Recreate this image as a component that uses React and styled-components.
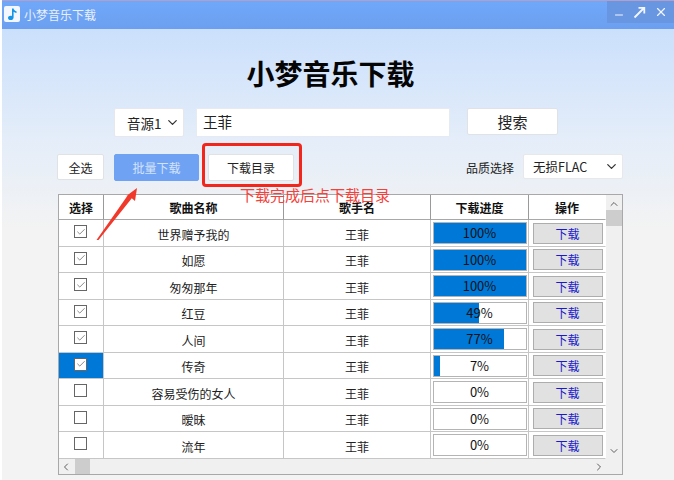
import React from 'react';
import styled, { createGlobalStyle } from 'styled-components';
import { Check, ChevronDown, ChevronUp, ChevronLeft, ChevronRight, Minus, X } from 'lucide-react';

const FONT = `"Noto Sans CJK SC", "Liberation Sans", sans-serif`;

const songs = [
  { name: '世界赠予我的', progress: 100, checked: true },
  { name: '如愿', progress: 100, checked: true },
  { name: '匆匆那年', progress: 100, checked: true },
  { name: '红豆', progress: 49, checked: true },
  { name: '人间', progress: 77, checked: true },
  { name: '传奇', progress: 7, checked: true, active: true },
  { name: '容易受伤的女人', progress: 0, checked: false },
  { name: '暧昧', progress: 0, checked: false },
  { name: '流年', progress: 0, checked: false },
];

const GlobalStyle = createGlobalStyle`
  html, body { margin: 0; padding: 0; background: #fff; }
  * { box-sizing: border-box; }
`;

const Page = styled.div`
  position: relative;
  width: 674px;
  height: 480px;
  padding-left: 2px;
  overflow: hidden;
  font-family: ${FONT};
  color: #222;
`;

const TitleBar = styled.div`
  display: flex;
  align-items: center;
  justify-content: space-between;
  height: 29px;
  border-top: 1px solid #b39fc9;
  background: linear-gradient(180deg, #70a8f9, #6c9ff0);
  color: #e8f0fd;
  font-size: 12px;
`;

const AppName = styled.div`
  display: flex;
  align-items: center;
  gap: 4px;
  padding: 0 0 2px 2px;
`;

const WindowButtons = styled.div`
  display: flex;
  align-items: center;
  justify-content: space-around;
  align-self: flex-start;
  width: 67px;
  height: 22px;
  padding: 0 2px;
  background: #6896e0;
  color: #f2f6fe;
`;

const Content = styled.div`
  height: 451px;
  padding: 25px 51px 0 56px;
  background: linear-gradient(180deg, #cbe0fc 0, #e4edf9 110px, #f3f3f3 200px);
`;

const Heading = styled.h1`
  margin: 0 0 14px;
  height: 40px;
  padding-right: 20px;
  text-align: center;
  font-size: 28px;
  line-height: 38px;
  font-weight: 700;
  color: #050505;
`;

const SearchRow = styled.div`
  display: flex;
  align-items: flex-start;
  height: 29px;
  padding-left: 56px;
  margin-bottom: 17px;
`;

const Select = styled.div`
  display: flex;
  align-items: center;
  justify-content: space-between;
  width: ${(p) => p.$width}px;
  height: ${(p) => p.$height}px;
  margin-left: ${(p) => p.$left || 0}px;
  padding: 0 3px 0 ${(p) => p.$pad}px;
  background: #fff;
  border: 1px solid #e6e8ec;
  border-radius: 2px;
  font-size: ${(p) => p.$size}px;
`;

const SearchInput = styled.div`
  width: 254px;
  height: 29px;
  margin-left: 12px;
  padding-left: 6px;
  background: #fff;
  border: 1px solid #e6ebf3;
  font-size: 14.5px;
  line-height: 26px;
`;

const Button = styled.button`
  width: ${(p) => p.$width}px;
  height: ${(p) => p.$height}px;
  margin-left: ${(p) => p.$left || 0}px;
  padding: 0;
  font-family: inherit;
  font-size: ${(p) => p.$size || 12}px;
  color: ${(p) => (p.$primary ? '#d3e2fb' : '#222')};
  background: ${(p) => (p.$primary ? '#70a2f3' : '#fff')};
  border: 1px solid ${(p) => (p.$primary ? '#70a2f3' : '#e0e2e6')};
  border-radius: 2px;
`;

const ActionRow = styled.div`
  display: flex;
  align-items: flex-start;
  height: 27px;
  margin: 0 0 13px -1px;
`;

const QualityLabel = styled.span`
  margin-left: auto;
  margin-right: 9px;
  padding-top: 5px;
  font-size: 12px;
`;

const TableBox = styled.div`
  width: 565px;
  height: 281px;
  background: #f0f0f0;
  border: 1px solid #a8a8a8;
  display: flex;
  flex-direction: column;
`;

const TableMain = styled.div`
  display: flex;
  height: 264px;
`;

const Grid = styled.div`
  width: 547px;
  display: grid;
  grid-template-columns: 45px 180px 147px 98px 77px;
  grid-template-rows: 25px repeat(9, 26.5px);
  background: #fff;
  font-size: 12px;
`;

const HeadCell = styled.div`
  display: flex;
  align-items: center;
  justify-content: center;
  font-weight: 700;
  color: #111;
  border-right: 1px solid ${(p) => (p.$last ? 'transparent' : '#9a9a9a')};
  border-bottom: 1px solid #a8a8a8;
`;

const Cell = styled.div`
  display: flex;
  align-items: center;
  justify-content: center;
  border-right: 1px solid ${(p) => (p.$last ? 'transparent' : '#c6c6c6')};
  border-bottom: 1px solid #c6c6c6;
  background: ${(p) => (p.$active ? '#0078d7' : 'transparent')};
  padding-top: ${(p) => p.$drop || 0}px;
`;

const CheckBox = styled.span`
  display: flex;
  align-items: center;
  justify-content: center;
  width: 13px;
  height: 13px;
  margin: 0 1px 2px 0;
  background: #fff;
  border: 1px solid #666;
  color: #444;
`;

const ProgressTrack = styled.div`
  position: relative;
  width: 94px;
  height: 22px;
  border: 1px solid #b4b4b4;
  background: #fff;
  font-size: 13px;
  line-height: 20px;
  text-align: center;
  color: #111;
`;

const ProgressFill = styled.div`
  position: absolute;
  left: 0;
  top: 0;
  bottom: 0;
  background: #0078d7;
`;

const ProgressLabel = styled.span`
  position: relative;
`;

const DownloadButton = styled.button`
  width: 70px;
  height: 21px;
  margin-left: 1px;
  padding: 0;
  font-family: inherit;
  font-size: 12px;
  color: #1a1acb;
  background: #e1e1e1;
  border: 1px solid #adadad;
`;

const VScroll = styled.div`
  width: 16px;
  display: flex;
  flex-direction: column;
  align-items: center;
  justify-content: space-between;
  color: #606060;
`;

const VThumb = styled.div`
  width: 100%;
  height: 16px;
  background: #cdcdcd;
`;

const VTop = styled.div`
  width: 100%;
  display: flex;
  flex-direction: column;
  align-items: center;
  padding-top: 3px;
`;

const HScroll = styled.div`
  flex: 1;
  display: flex;
  align-items: center;
  padding: 0 17px 0 1px;
  color: #606060;
`;

const HThumb = styled.div`
  width: 15px;
  height: 100%;
  margin-left: 3px;
  margin-right: auto;
  background: #cdcdcd;
`;

const RedFrame = styled.div`
  position: absolute;
  left: 202px;
  top: 143px;
  width: 100px;
  height: 44px;
  border: 3px solid #f2261b;
  border-radius: 4px;
`;

const RedNote = styled.div`
  position: absolute;
  left: 240px;
  top: 184px;
  font-size: 15px;
  line-height: 22px;
  color: #f4423a;
`;

const ArrowMark = styled.svg`
  position: absolute;
  left: 90px;
  top: 182px;
`;

function MusicIcon() {
  return (
    <svg width="16" height="16" viewBox="0 0 16 16">
      <rect width="16" height="16" rx="2" fill="#f4f8fe" />
      <path d="M8 2.500h1.600c.2 1.600 1.500 2.400 2.900 2.800v1.600c-1.200-.1-2.200-.6-2.900-1.200v5.700c0 1.600-1.400 2.600-3 2.600-1.500 0-2.600-.9-2.600-2.100 0-1.300 1.300-2.200 2.800-2.200.4 0 .8.100 1.200.2z" fill="#1495e8" />
    </svg>
  );
}

function RestoreIcon() {
  return (
    <svg width="13" height="13" viewBox="0 0 13 13" fill="none" stroke="currentColor" strokeWidth="1.800">
      <path d="M1.500 11.500 11 2M5.500 1.800h5.800v5.800" />
    </svg>
  );
}

export default function App() {
  return (
    <Page>
      <GlobalStyle />
      <TitleBar>
        <AppName>
          <MusicIcon />
          小梦音乐下载
        </AppName>
        <WindowButtons>
          <Minus size={12} strokeWidth={2} style={{ marginTop: 6 }} />
          <RestoreIcon />
          <X size={14} strokeWidth={2} />
        </WindowButtons>
      </TitleBar>
      <Content>
        <Heading>小梦音乐下载</Heading>
        <SearchRow>
          <Select $width={70} $height={29} $pad={12} $size={13.500}>
            音源1
            <ChevronDown size={15} color="#333" />
          </Select>
          <SearchInput>王菲</SearchInput>
          <Button $width={91} $height={27} $left={17} $size={15}>搜索</Button>
        </SearchRow>
        <ActionRow>
          <Button $width={47} $height={26}>全选</Button>
          <Button $primary $width={85} $height={27} $left={10}>批量下载</Button>
          <Button $width={86} $height={27} $left={9}>下载目录</Button>
          <QualityLabel>品质选择</QualityLabel>
          <Select $width={100} $height={25} $pad={9} $size={12.500}>
            无损FLAC
            <ChevronDown size={15} color="#333" />
          </Select>
        </ActionRow>
        <TableBox>
          <TableMain>
            <Grid>
              <HeadCell>选择</HeadCell>
              <HeadCell>歌曲名称</HeadCell>
              <HeadCell>歌手名</HeadCell>
              <HeadCell>下载进度</HeadCell>
              <HeadCell $last>操作</HeadCell>
              {songs.map((song) => (
                <React.Fragment key={song.name}>
                  <Cell $active={song.active}>
                    <CheckBox>
                      {song.checked && <Check size={10} strokeWidth={1.500} />}
                    </CheckBox>
                  </Cell>
                  <Cell $drop={3}>{song.name}</Cell>
                  <Cell $drop={3}>王菲</Cell>
                  <Cell $drop={1}>
                    <ProgressTrack>
                      <ProgressFill style={{ width: `${song.progress}%` }} />
                      <ProgressLabel>{song.progress}%</ProgressLabel>
                    </ProgressTrack>
                  </Cell>
                  <Cell $last $drop={1}>
                    <DownloadButton>下载</DownloadButton>
                  </Cell>
                </React.Fragment>
              ))}
            </Grid>
            <VScroll>
              <VTop>
                <ChevronUp size={12} />
                <VThumb />
              </VTop>
              <ChevronDown size={12} style={{ marginBottom: 2 }} />
            </VScroll>
          </TableMain>
          <HScroll>
            <ChevronLeft size={12} />
            <HThumb />
            <ChevronRight size={12} />
          </HScroll>
        </TableBox>
      </Content>
      <RedFrame />
      <RedNote>下载完成后点下载目录</RedNote>
      <ArrowMark width="52" height="60" viewBox="0 0 52 60">
        <path d="M47 6 45 19 41.800 16.200 8.500 58 6.500 58 37.800 13.300 35 15z" fill="#f0392b" />
      </ArrowMark>
    </Page>
  );
}
